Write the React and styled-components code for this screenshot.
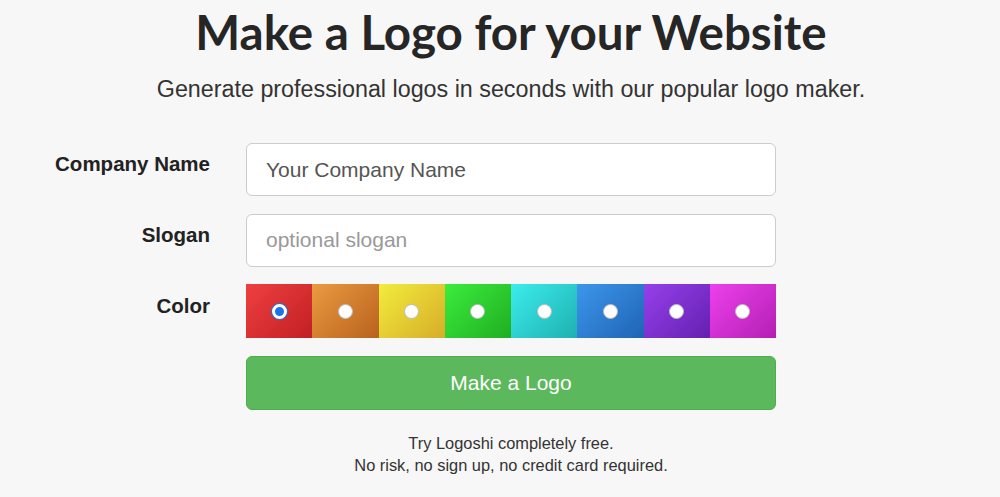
import React, { useState } from 'react';
import styled, { createGlobalStyle } from 'styled-components';

const GlobalStyle = createGlobalStyle`
  html, body {
    margin: 0;
    padding: 0;
    background: #f7f7f7;
  }
  body {
    font-family: "Liberation Sans", Arial, sans-serif;
    color: #333;
  }
`;

const Page = styled.main`
  width: 1000px;
  padding-top: 6px;
`;

const Title = styled.h1`
  margin: 0;
  text-align: center;
  font-family: Lato, "Liberation Sans", sans-serif;
  font-weight: 700;
  font-size: 47.5px;
  line-height: 52px;
  color: #262626;
  padding-left: 22px;
`;

const Lead = styled.p`
  margin: 18px 0 0;
  text-align: center;
  font-size: 23.3px;
  line-height: 26px;
  color: #333;
  padding-left: 22px;
`;

const Form = styled.form`
  display: grid;
  grid-template-columns: 246px 530px;
  row-gap: 17.5px;
  margin-top: 41px;
`;

const Label = styled.label`
  justify-self: end;
  padding-right: 36px;
  padding-top: ${p => p.$top || 9}px;
  font-size: 20.5px;
  font-weight: 700;
  color: #222;
`;

const Input = styled.input`
  box-sizing: border-box;
  width: 100%;
  height: 53px;
  padding: 0 19px;
  border: 1px solid #ccc;
  border-radius: 6px;
  background: #fff;
  font-family: inherit;
  font-size: 21px;
  color: #555;
  outline: none;

  &::placeholder {
    color: ${p => (p.$strong ? '#555' : '#999')};
  }
`;

const Swatches = styled.div`
  display: grid;
  grid-template-columns: repeat(8, 1fr);
  height: 54px;
`;

const Swatch = styled.label`
  display: flex;
  align-items: center;
  justify-content: center;
  background: linear-gradient(135deg, ${p => p.$from}, ${p => p.$to});
  cursor: pointer;
`;

const Radio = styled.span`
  box-sizing: border-box;
  width: 15px;
  height: 15px;
  border-radius: 50%;
  background: ${p => (p.$on ? '#1a73e8' : '#fff')};
  border: ${p => (p.$on ? '3px solid #fff' : '1px solid #bbb')};
  box-shadow: ${p => (p.$on ? '0 0 0 1px #2b6fcf' : 'none')};
`;

const Spacer = styled.div``;

const Button = styled.button`
  height: 54px;
  border: 1px solid #4cae4c;
  border-radius: 6px;
  background: #5cb85c;
  color: #fff;
  font-family: inherit;
  font-size: 21px;
  cursor: pointer;
`;

const Note = styled.p`
  margin: 22px 0 0;
  padding-left: 22px;
  text-align: center;
  font-size: 16.4px;
  line-height: 22px;
  color: #333;
`;

const colors = [
  ['#ee4040', '#c21f24'],
  ['#ec9a40', '#b8621e'],
  ['#f2ec3c', '#d6ad28'],
  ['#3cec3c', '#1fae22'],
  ['#3cecec', '#1fb0b0'],
  ['#3c96ec', '#1f64b4'],
  ['#9640ec', '#6420b0'],
  ['#ec40ec', '#b41fb4'],
];

export default function App() {
  const [picked, setPicked] = useState(0);

  return (
    <Page>
      <GlobalStyle />
      <Title>Make a Logo for your Website</Title>
      <Lead>Generate professional logos in seconds with our popular logo maker.</Lead>
      <Form onSubmit={e => e.preventDefault()}>
        <Label htmlFor="company">Company Name</Label>
        <Input id="company" placeholder="Your Company Name" $strong />
        <Label htmlFor="slogan">Slogan</Label>
        <Input id="slogan" placeholder="optional slogan" />
        <Label $top={10}>Color</Label>
        <Swatches>
          {colors.map(([from, to], i) => (
            <Swatch key={i} $from={from} $to={to} onClick={() => setPicked(i)}>
              <Radio $on={picked === i} />
            </Swatch>
          ))}
        </Swatches>
        <Spacer />
        <Button type="submit">Make a Logo</Button>
      </Form>
      <Note>
        Try Logoshi completely free.<br />
        No risk, no sign up, no credit card required.
      </Note>
    </Page>
  );
}
